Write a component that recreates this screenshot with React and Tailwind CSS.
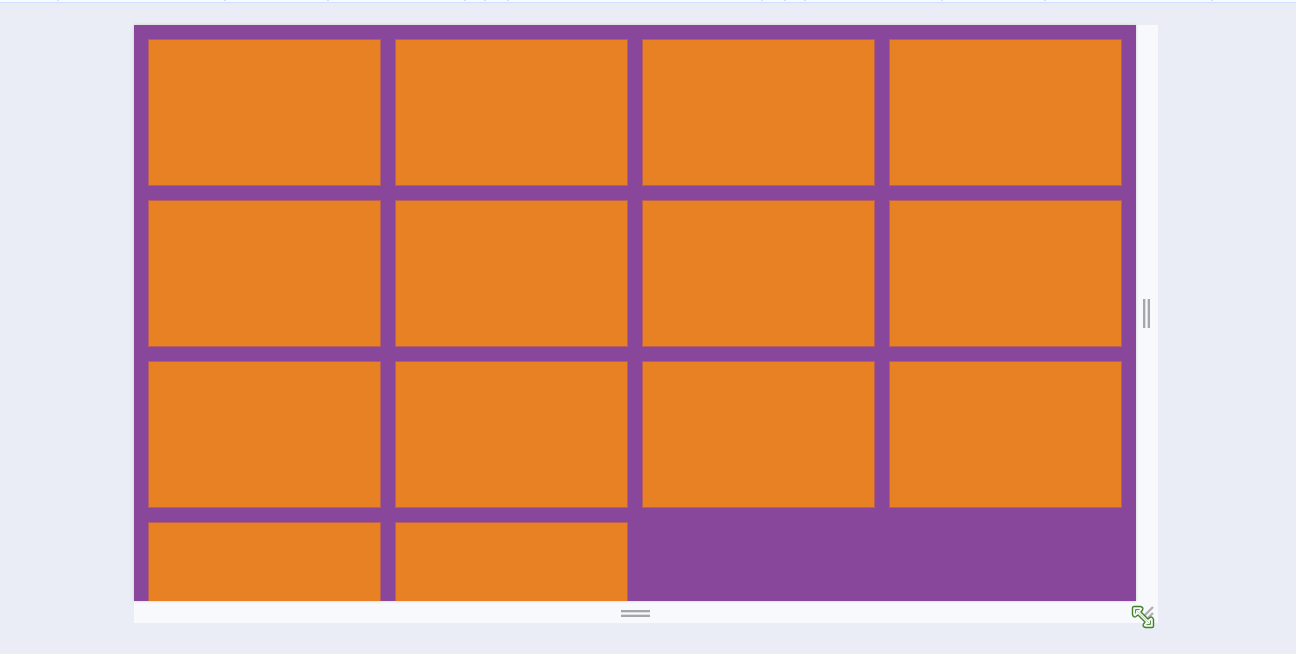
const segments = [
  "w-[59px]",
  "w-[167px]",
  "w-[103px]",
  "w-[137px]",
  "w-[20px]",
  "w-[23px]",
  "w-[254px]",
  "w-[23px]",
  "w-[20px]",
  "w-[137px]",
  "w-[103px]",
  "w-[167px]",
];

function Ruler() {
  return (
    <header className="flex h-[3px] shrink-0 flex-col overflow-hidden border-b border-[#d0e1ff] bg-[#f8fafe]">
      <div className="flex h-px">
        {segments.map((width, i) => (
          <div key={i} className={`${width} shrink-0 border-r-2 border-[#cfe0ff]`} />
        ))}
      </div>
    </header>
  );
}

const arrow =
  "M3 1.5 L9.5 1.5 Q13 2.5 11.5 5 L10 7 L17 14 L19 12.5 Q21.5 11 22.5 14.5 L22.5 21 Q22.5 22.5 21 22.5 L14.5 22.5 Q11 21.5 12.5 19 L14 17 L7 10 L5 11.5 Q2.5 13 1.5 9.5 L1.5 3 Q1.5 1.5 3 1.5 Z";

function ResizeCursor() {
  return (
    <svg className="absolute right-[3px] -bottom-[6px] h-6 w-6" viewBox="0 0 24 24" aria-hidden="true">
      <path d={arrow} fill="#f3f7f1" stroke="#43802c" strokeWidth="1.4" strokeLinejoin="round" />
      <path
        d="M4.5 8.5 V4.5 H8.5 M19.5 15.5 V19.5 H15.5"
        fill="none"
        stroke="#5d924c"
        strokeWidth="1"
        strokeLinejoin="round"
      />
      <path d="M5 5 L19 19" stroke="#b9ccb2" strokeWidth="0.8" />
    </svg>
  );
}

export default function App() {
  return (
    <div className="flex h-screen flex-col overflow-hidden bg-[#eaedf5]">
      <Ruler />
      <main className="flex min-h-0 grow pt-[22px] pr-[138px] pb-[31px] pl-[134px]">
        <div className="grid w-full grid-cols-[minmax(0,1fr)_22px] grid-rows-[minmax(0,1fr)_22px] bg-[#f8f9fd]">
          <section className="grid grid-cols-4 content-start gap-[14px] overflow-hidden bg-[#89479b] p-[14px] shadow-[0_0_3px_#cccccc]">
            {Array.from({ length: 14 }, (_, i) => (
              <div key={i} className="h-[147px] border border-[#b85f59] bg-[#e78123]" />
            ))}
          </section>
          <button
            type="button"
            aria-label="Resize width"
            className="flex cursor-ew-resize items-center justify-center gap-px pr-px"
          >
            <span className="h-[29px] w-[3px] border-r border-[#dcdddf] bg-[#a5a7a7]" />
            <span className="h-[29px] w-[3px] border-l border-[#dcdddf] bg-[#a5a7a7]" />
          </button>
          <button
            type="button"
            aria-label="Resize height"
            className="flex cursor-ns-resize flex-col items-center justify-center gap-px pt-[3px]"
          >
            <span className="h-[3px] w-[29px] border-b border-[#dcdddf] bg-[#a5a7a7]" />
            <span className="h-[3px] w-[29px] border-t border-[#dcdddf] bg-[#a5a7a7]" />
          </button>
          <button type="button" aria-label="Resize both" className="relative cursor-nwse-resize">
            <svg className="h-[22px] w-[22px]" viewBox="0 0 22 22" aria-hidden="true">
              <path d="M6 17 L17 6 M12 17 L17 12" stroke="#aeb0b1" strokeWidth="2.4" />
            </svg>
            <ResizeCursor />
          </button>
        </div>
      </main>
    </div>
  );
}
